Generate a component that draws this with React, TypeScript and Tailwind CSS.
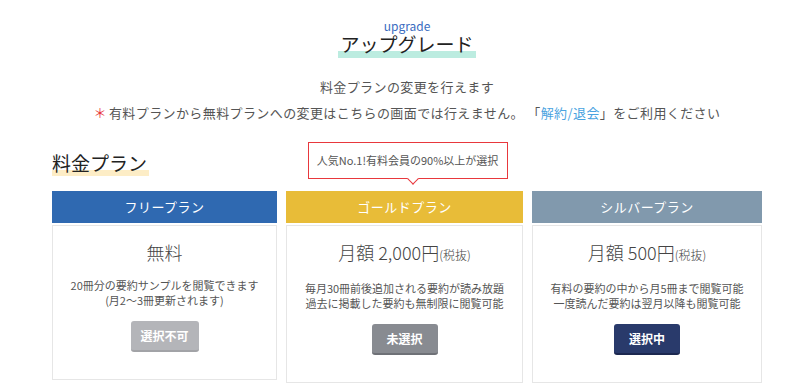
const font = "font-['Noto_Sans_CJK_JP','Noto_Sans',sans-serif]";

type Plan = {
  name: string;
  head: string;
  width: string;
  price: React.ReactNode;
  lines: string[];
  button: string;
  btnClass: string;
};

const plans: Plan[] = [
  {
    name: 'フリープラン',
    head: 'bg-[#2f69b1]',
    width: 'w-[225px]',
    price: <span>無料</span>,
    lines: ['20冊分の要約サンプルを閲覧できます', '(月2〜3冊更新されます)'],
    button: '選択不可',
    btnClass: 'w-[68px] bg-[#b4b5b9] border-b-[#a2a3a7]',
  },
  {
    name: 'ゴールドプラン',
    head: 'bg-[#e8bc38]',
    width: 'w-[237px]',
    price: (
      <span>
        月額 2,000円<span className="text-[12px]">(税抜)</span>
      </span>
    ),
    lines: ['毎月30冊前後追加される要約が読み放題', '過去に掲載した要約も無制限に閲覧可能'],
    button: '未選択',
    btnClass: 'w-[66px] bg-[#888b91] border-b-[#6e7177]',
  },
  {
    name: 'シルバープラン',
    head: 'bg-[#8199ad]',
    width: 'w-[230px]',
    price: (
      <span>
        月額 500円<span className="text-[12px]">(税抜)</span>
      </span>
    ),
    lines: ['有料の要約の中から月5冊まで閲覧可能', '一度読んだ要約は翌月以降も閲覧可能'],
    button: '選択中',
    btnClass: 'w-[66px] bg-[#293a6b] border-b-[#1c2850]',
  },
];

function PlanCard({ plan }: { plan: Plan }) {
  return (
    <div className={`${plan.width} flex flex-col`}>
      <div className={`${plan.head} h-[32px] flex items-center justify-center text-white text-[13px] tracking-[0.5px]`}>
        {plan.name}
      </div>
      <div className="mt-[2px] border border-[#e6e6e6] flex flex-col items-center pt-[13px] pb-[27px]">
        <div className="text-[18px] leading-[26px] text-[#444] font-light">{plan.price}</div>
        <div className="mt-[13px] text-[11px] leading-[15px] text-[#555] text-center">
          {plan.lines.map((l) => (
            <div key={l}>{l}</div>
          ))}
        </div>
        <button
          className={`${plan.btnClass} mt-[13px] h-[31px] rounded-[3px] border-b-2 text-white text-[12px] font-bold`}
        >
          {plan.button}
        </button>
      </div>
    </div>
  );
}

export default function App() {
  return (
    <div className={`${font} w-[800px] h-[392px] bg-white overflow-hidden`}>
      <div className="ml-[52px] w-[710px] flex flex-col items-center pt-[20px]">
        <div className="text-[12px] leading-[12px] text-[#3a6cbf]">upgrade</div>
        <div className="px-[2px] pb-[2px] text-[19px] leading-[24px] text-[#222] bg-[linear-gradient(transparent_73%,#bcece0_73%)]">
          アップグレード
        </div>

        <div className="mt-[19px] text-[13px] leading-[20px] tracking-[0.4px] text-[#555]">料金プランの変更を行えます</div>
        <div className="mt-[6px] text-[13px] leading-[20px] tracking-[0.4px] text-[#555]">
          <span className="text-[#e8383d] leading-none mr-[2px]">＊</span>
          有料プランから無料プランへの変更はこちらの画面では行えません。 「
          <span className="text-[#4aa3df]">解約/退会</span>」をご利用ください
        </div>

        <div className="mt-[19px] w-full flex gap-[9px]">
          <div className="w-[225px] pt-[8px]">
            <span className="inline-block text-[19px] leading-[26px] text-[#222] bg-[linear-gradient(transparent_77%,#fdedc6_77%)] pr-[2px]">
              料金プラン
            </span>
          </div>
          <div className="w-[237px] flex justify-center">
            <div className="relative ml-[6px] w-[200px] h-[37px] border border-[#e8383d] bg-white flex items-center justify-center text-[11px] text-[#555]">
              人気No.1!有料会員の90%以上が選択
              <span className="absolute left-[100px] bottom-[-5px] w-[8px] h-[8px] bg-white border-r border-b border-[#e8383d] rotate-45" />
            </div>
          </div>
        </div>

        <div className="mt-[12px] w-full flex gap-[9px]">
          {plans.map((p) => (
            <PlanCard key={p.name} plan={p} />
          ))}
        </div>
      </div>
    </div>
  );
}
